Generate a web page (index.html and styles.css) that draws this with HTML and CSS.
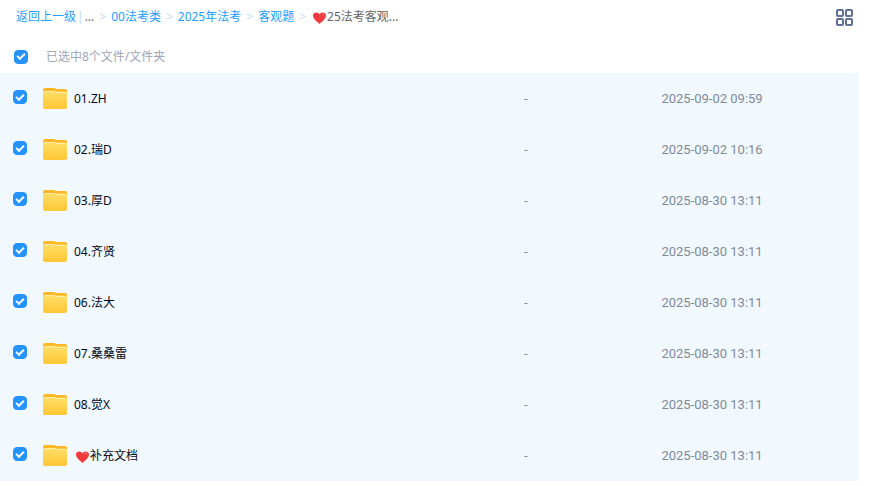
FILE: index.html
```html
<!DOCTYPE html>
<html lang="zh-CN">
    <head>
        <meta charset="UTF-8" />
        <meta name="viewport" content="width=device-width, initial-scale=1.0" />
        <title>文件列表</title>
        <link rel="stylesheet" href="styles.css">
    </head>

    <body>
        <svg class="defs" aria-hidden="true">
            <defs>
                <linearGradient id="front" x1="0" y1="0" x2="0" y2="1">
                    <stop offset="0" stop-color="#ffdf68" />
                    <stop offset="1" stop-color="#ffc635" />
                </linearGradient>
                <symbol id="folder" viewBox="0 0 24 22">
                    <path d="M0 3Q0 1 2 1H10.500Q12 1 13 2H22Q24 2 24 4V12H0Z" fill="#ffb624" />
                    <path d="M0 6Q0 4 2 4H11.500Q12.500 4 13.500 4.500H22Q24 4.500 24 6V20Q24 22 22 22H2Q0 22 0 20Z" fill="url(#front)" />
                    <path d="M1 5.500Q1 4.500 2 4.500H11.500Q12.500 4.500 13.500 5.500H23" fill="none" stroke="#ffeda8" />
                </symbol>
                <symbol id="heart" viewBox="0 0 13 12">
                    <path d="M6.500 12C4 9.500 0 7 0 3.500C0 1.500 1.500 .5 3.300 .5C4.800 .5 6 1.300 6.500 2.500C7 1.300 8.200 .5 9.700 .5C11.500 .5 13 1.500 13 3.500C13 7 9 9.500 6.500 12Z" fill="#f4393c" />
                    <path d="M8.500 2.500Q10.500 1.500 11.300 3.500" fill="none" stroke="#ff8b83" />
                </symbol>
            </defs>
        </svg>

        <div class="panel">
            <header class="nav">
                <nav class="crumbs">
                    <a href="#">返回上一级</a>
                    <span class="bar">|</span>
                    <span class="more">...</span>
                    <span class="sep">&gt;</span>
                    <a href="#">00法考类</a>
                    <span class="sep">&gt;</span>
                    <a href="#">2025年法考</a>
                    <span class="sep">&gt;</span>
                    <a href="#">客观题</a>
                    <span class="sep">&gt;</span>
                    <span class="current"><svg class="heart"><use href="#heart" /></svg>25法考客观...</span>
                </nav>
                <button class="view" type="button" aria-label="切换视图">
                    <svg width="17" height="17" viewBox="0 0 17 17" fill="none" stroke="#5e6e96" stroke-width="2">
                        <rect x="1" y="1" width="6" height="6" rx="1" />
                        <rect x="10" y="1" width="6" height="6" rx="1" />
                        <rect x="1" y="10" width="6" height="6" rx="1" />
                        <rect x="10" y="10" width="6" height="6" rx="1" />
                    </svg>
                </button>
            </header>

            <div class="selected">
                <input class="check" type="checkbox" id="all" checked />
                <label for="all">已选中8个文件/文件夹</label>
            </div>

            <table class="list">
                <colgroup>
                    <col class="col-name" />
                    <col class="col-size" />
                    <col class="col-date" />
                </colgroup>
                <tbody>
                    <tr>
                        <td><div class="file"><input class="check" type="checkbox" id="f1" checked /><svg class="folder"><use href="#folder" /></svg><label for="f1">01.ZH</label></div></td>
                        <td>-</td>
                        <td>2025-09-02 09:59</td>
                    </tr>
                    <tr>
                        <td><div class="file"><input class="check" type="checkbox" id="f2" checked /><svg class="folder"><use href="#folder" /></svg><label for="f2">02.瑞D</label></div></td>
                        <td>-</td>
                        <td>2025-09-02 10:16</td>
                    </tr>
                    <tr>
                        <td><div class="file"><input class="check" type="checkbox" id="f3" checked /><svg class="folder"><use href="#folder" /></svg><label for="f3">03.厚D</label></div></td>
                        <td>-</td>
                        <td>2025-08-30 13:11</td>
                    </tr>
                    <tr>
                        <td><div class="file"><input class="check" type="checkbox" id="f4" checked /><svg class="folder"><use href="#folder" /></svg><label for="f4">04.齐贤</label></div></td>
                        <td>-</td>
                        <td>2025-08-30 13:11</td>
                    </tr>
                    <tr>
                        <td><div class="file"><input class="check" type="checkbox" id="f5" checked /><svg class="folder"><use href="#folder" /></svg><label for="f5">06.法大</label></div></td>
                        <td>-</td>
                        <td>2025-08-30 13:11</td>
                    </tr>
                    <tr>
                        <td><div class="file"><input class="check" type="checkbox" id="f6" checked /><svg class="folder"><use href="#folder" /></svg><label for="f6">07.桑桑雷</label></div></td>
                        <td>-</td>
                        <td>2025-08-30 13:11</td>
                    </tr>
                    <tr>
                        <td><div class="file"><input class="check" type="checkbox" id="f7" checked /><svg class="folder"><use href="#folder" /></svg><label for="f7">08.觉X</label></div></td>
                        <td>-</td>
                        <td>2025-08-30 13:11</td>
                    </tr>
                    <tr>
                        <td><div class="file"><input class="check" type="checkbox" id="f8" checked /><svg class="folder"><use href="#folder" /></svg><label for="f8"><svg class="heart"><use href="#heart" /></svg>补充文档</label></div></td>
                        <td>-</td>
                        <td>2025-08-30 13:11</td>
                    </tr>
                </tbody>
            </table>
        </div>

        <script>
            var all = document.querySelector("#all");
            var boxes = document.querySelectorAll(".list .check");
            var tip = document.querySelector(".selected label");

            function count() {
                var n = document.querySelectorAll(".list .check:checked").length;
                all.checked = n == boxes.length;
                tip.innerText = "已选中" + n + "个文件/文件夹";
            }

            // 全选 / 取消全选
            all.onclick = function () {
                for (var i = 0; i < boxes.length; i++) {
                    boxes[i].checked = all.checked;
                }
                count();
            };

            for (var i = 0; i < boxes.length; i++) {
                boxes[i].onclick = count;
            }
        </script>
    </body>
</html>
```

FILE: styles.css
```css
body {
    margin: 0;
    color: #03081a;
    background: #fff;
    font: 12px/18px "Noto Sans", "Noto Sans CJK SC", sans-serif;
}

a {
    color: #1e9fff;
    text-decoration: none;
}

.defs {
    position: absolute;
    width: 0;
    height: 0;
}

.panel {
    margin-right: 11px;
}

.nav {
    display: flex;
    justify-content: space-between;
    align-items: center;
    height: 34px;
    padding: 0 6px 0 16px;
    margin-bottom: 6px;
}

.crumbs {
    display: flex;
    align-items: center;
    white-space: nowrap;
}

.bar {
    margin: 0 1px;
    color: #c4d8f0;
}

.more,
.current {
    color: #666;
}

.sep {
    margin: 0 5px;
    color: #c4d8f0;
}

.heart {
    width: 13px;
    height: 12px;
    margin: 0 1px 0 2px;
    vertical-align: -3px;
}

.view {
    display: flex;
    padding: 0;
    border: 0;
    background: none;
    cursor: pointer;
}

.selected {
    display: flex;
    align-items: center;
    gap: 18px;
    height: 33px;
    padding-left: 14px;
    color: #a0a6b5;
}

.check {
    appearance: none;
    flex: none;
    display: flex;
    align-items: center;
    justify-content: center;
    width: 14px;
    height: 14px;
    margin: 0;
    border: 1px solid #b8c4d8;
    border-radius: 4px;
    background: #fff;
}

.check:checked {
    border-color: #2493fd;
    background: #2493fd;
}

/* 对勾 */
.check:checked::before {
    content: "";
    box-sizing: border-box;
    width: 8px;
    height: 5px;
    margin-bottom: 2px;
    border: solid #fff;
    border-width: 0 0 2px 2px;
    transform: rotate(-45deg);
}

.list {
    width: 100%;
    table-layout: fixed;
    border-collapse: collapse;
    background: #f1f9ff;
}

.list td {
    height: 51px;
    padding: 0;
    color: #818999;
    font-family: Roboto, sans-serif;
    font-size: 13px;
}

.col-name {
    width: 61%;
}

.col-size {
    width: 16%;
}

.list .file {
    display: flex;
    align-items: center;
    padding-left: 13px;
    color: #03081a;
    font: 12px/18px "Noto Sans", "Noto Sans CJK SC", sans-serif;
}

.file .check {
    margin-bottom: 3px;
}

.folder {
    width: 24px;
    height: 22px;
    margin: 0 7px 2px 16px;
}
```
